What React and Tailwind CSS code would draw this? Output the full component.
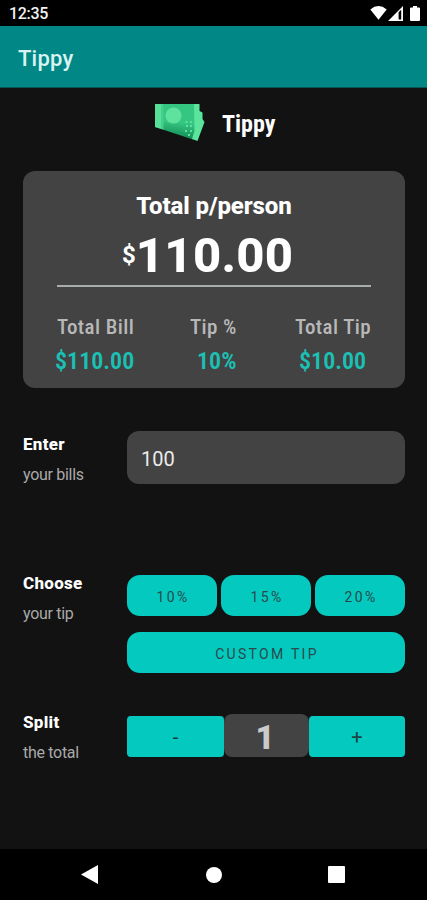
const summary = [
  { label: "Total Bill", value: "$110.00", labelClass: "w-[76px]", valueClass: "-ml-[2px] w-[80px]" },
  { label: "Tip %", value: "10%", labelClass: "w-[47px] -ml-[3px]", valueClass: "ml-[4px] w-[40px]" },
  { label: "Total Tip", value: "$10.00", labelClass: "w-[76px]", valueClass: "ml-[4px] w-[68px]" },
];

function StatusBar() {
  return (
    <div className="flex h-[26px] items-center justify-between bg-black pl-[9px] pr-[7px] text-[#f2f2f2]">
      <span className="mt-[2px] text-[16px] font-medium leading-[18px] tracking-[-0.3px]">12:35</span>
      <div className="flex items-center text-white">
        <svg width="17" height="14" viewBox="0 0 17 14" fill="currentColor">
          <path d="M0.3 3.4Q8.5 -3.4 16.7 3.4L8.5 13.7Z" />
        </svg>
        <svg width="15" height="15" viewBox="0 0 15 15" fill="currentColor" className="ml-px">
          <path fillRule="evenodd" d="M0 15L15 0V15ZM10.6 6.3V13.4H13.2V3.8Z" />
        </svg>
        <svg width="10" height="15" viewBox="0 0 10 15" fill="currentColor" className="ml-[7px]">
          <path d="M3 0H7V1.6H9Q10 1.6 10 2.6V14Q10 15 9 15H1Q0 15 0 14V2.6Q0 1.6 1 1.6H3Z" />
        </svg>
      </div>
    </div>
  );
}

function MoneyIcon() {
  return (
    <svg width="50" height="38" viewBox="0 0 50 38">
      <defs>
        <linearGradient id="note" x1="0.55" y1="0" x2="0.4" y2="1">
          <stop offset="0.5" stopColor="#35c681" />
          <stop offset="0.9" stopColor="#15905a" />
        </linearGradient>
      </defs>
      <path d="M0 0H40V28L38 35.500L0 23Z" fill="url(#note)" />
      <path d="M39 0H44.500V7L47.500 8.500V15L49.500 18L42.500 37L37 35L39.500 27Z" fill="#5be49b" />
      <path d="M0 0H6.500V25L0 23Z" fill="#58df98" />
      <path d="M6.500 0H8.500V25.500L6.500 25Z" fill="#45d08c" />
      <circle cx="18.500" cy="11.500" r="8" fill="#5fe29d" />
      <path d="M30.500 17h2v2h-2zM35 17h2v2h-2zM31 21h2v2h-2zM35 21h2v2h-2zM30 26h2v2h-2zM35 26h2v2h-2zM33 30h2v2h-2z" fill="#62dda0" />
    </svg>
  );
}

function RowLabel({ title, text }) {
  return (
    <div className="w-[104px] shrink-0 pt-px">
      <p className="text-[17px] font-extrabold leading-[24px] tracking-[0.3px] text-white">{title}</p>
      <p className="mt-[6px] text-[16px] leading-[26px] tracking-[-0.3px] text-[#a9a9a9]">{text}</p>
    </div>
  );
}

function TipButton({ children }) {
  return (
    <button className="h-[41px] flex-1 rounded-[13px] bg-[#03c9bf] pl-[2px] pt-[3px] text-[14px] tracking-[2.3px] text-[#29494a]">
      {children}
    </button>
  );
}

export default function App() {
  return (
    <div className="flex h-[900px] w-[427px] flex-col overflow-hidden bg-[#121212] font-['Roboto',sans-serif]">
      <StatusBar />
      <header className="flex h-[62px] items-center border-b border-[#045755] bg-[#018786] pl-[18px]">
        <h1 className="mt-[4px] text-[22px] font-medium leading-[28px] tracking-[0.2px] text-[#d9f3f1]">Tippy</h1>
      </header>

      <main className="flex-1 px-[23px] pr-[22px]">
        <div className="flex h-[83px] pl-[132px] pt-[16px]">
          <MoneyIcon />
          <h2 className="ml-[17px] mt-[5px] text-[24px] font-bold leading-[30px] text-white [font-stretch:75%]">Tippy</h2>
        </div>

        <section className="h-[217px] rounded-xl bg-[#434343] px-[34px] pt-[20px]">
          <h3 className="text-center text-[24px] font-extrabold leading-[30px] tracking-[-0.1px] text-white">Total p/person</h3>
          <div className="mt-[9px] flex h-[55px] pl-[65px] text-white">
            <span className="text-[24px] font-bold leading-[50px]">$</span>
            <span className="text-[49px] font-extrabold leading-[52px] tracking-[0.3px]">110.00</span>
          </div>
          <div className="h-[2px] bg-[#a7adaa]" />
          <div className="mt-[26px] flex justify-between whitespace-nowrap">
            {summary.map((item) => (
              <div key={item.label}>
                <p className={`${item.labelClass} text-[21px] font-medium leading-[28px] tracking-[0.4px] text-[#b8b8b8] [font-stretch:75%]`}>
                  {item.label}
                </p>
                <p className={`${item.valueClass} mt-[5px] text-[24px] font-semibold leading-[30px] text-[#1bc0b4] [font-stretch:75%]`}>
                  {item.value}
                </p>
              </div>
            ))}
          </div>
        </section>

        <div className="mt-[43px] flex h-[145px]">
          <RowLabel title="Enter" text="your bills" />
          <div className="flex h-[53px] flex-1 items-center rounded-xl bg-[#434343] pl-[14px] pt-[2px] text-[20px] text-[#ececec]">
            100
          </div>
        </div>

        <div className="flex h-[139px]">
          <div className="-mt-[6px]">
            <RowLabel title="Choose" text="your tip" />
          </div>
          <div className="-mt-px flex flex-1 flex-col gap-4">
            <div className="flex gap-1">
              <TipButton>10%</TipButton>
              <TipButton>15%</TipButton>
              <TipButton>20%</TipButton>
            </div>
            <div className="flex">
              <TipButton>CUSTOM TIP</TipButton>
            </div>
          </div>
        </div>

        <div className="flex">
          <div className="-mt-[6px]">
            <RowLabel title="Split" text="the total" />
          </div>
          <div className="-mt-px flex flex-1 items-end self-start">
            <button className="h-[41px] w-[97px] rounded bg-[#03c9bf] text-[20px] text-[#1c3838]">-</button>
            <div className="flex h-[43px] flex-1 items-center justify-center rounded-lg bg-[#434343] pt-[4px] pr-[3px] text-[33px] font-black text-[#cacaca]">
              1
            </div>
            <button className="h-[41px] w-[96px] rounded bg-[#03c9bf] text-[20px] text-[#1c4646]">+</button>
          </div>
        </div>
      </main>

      <nav className="flex h-[51px] items-center bg-black text-white">
        <svg width="17" height="19" viewBox="0 0 17 19" fill="currentColor" className="ml-[81px]">
          <path d="M0 9.500L17 0V19Z" />
        </svg>
        <div className="ml-[108px] size-4 rounded-full bg-white" />
        <div className="ml-[106px] size-[17px] rounded-[1px] bg-white" />
      </nav>
    </div>
  );
}
